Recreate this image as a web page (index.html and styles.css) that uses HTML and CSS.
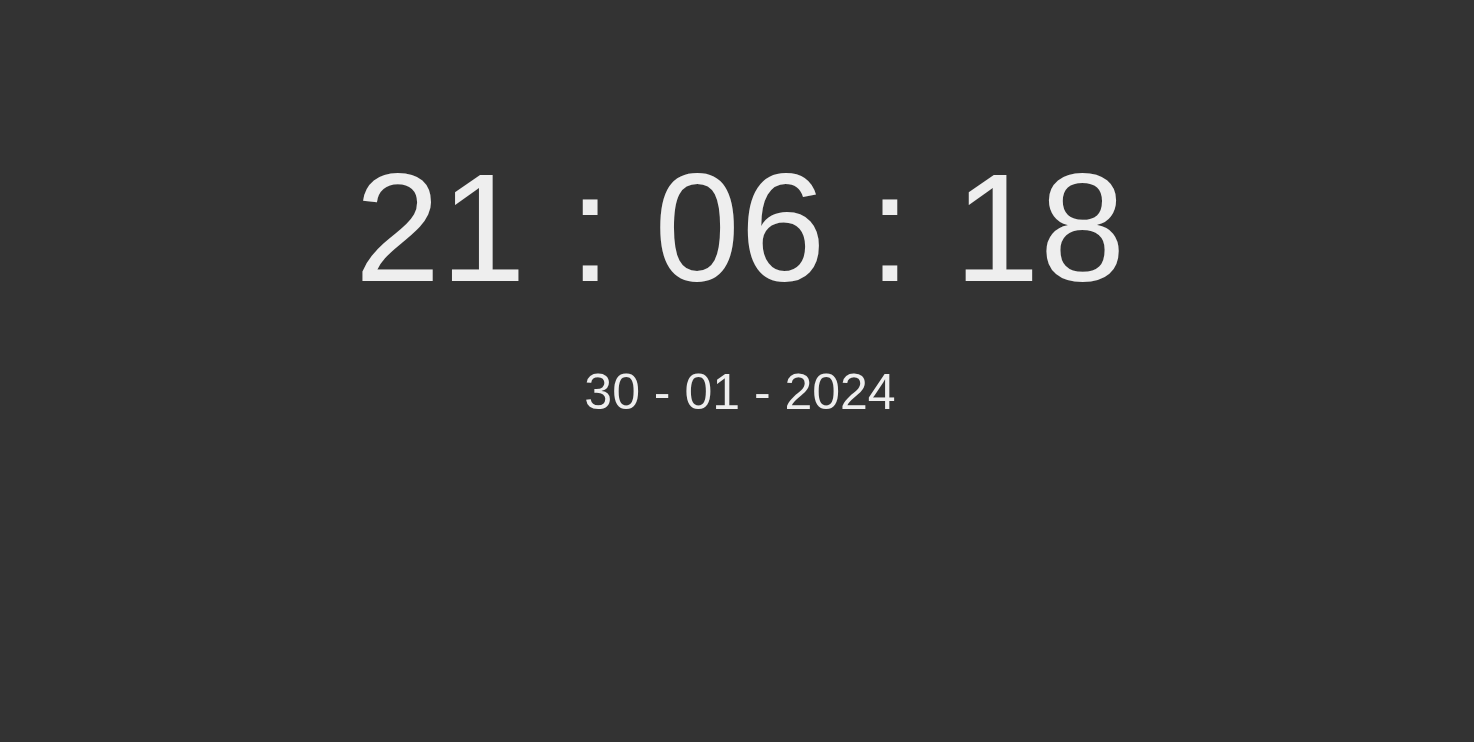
FILE: index.html
```html
<!DOCTYPE html>
<html>
<head>
<meta charset="utf-8">
<link rel="stylesheet" href="styles.css">
<title>Clock</title>
</head>
<body>
<main class="clock">
  <div class="time">21 : 06 : 18</div>
  <div class="date">30 - 01 - 2024</div>
</main>
</body>
</html>
```
FILE: styles.css
```css
html, body {
  margin: 0;
  height: 100%;
}
body {
  background: #333333;
  color: #eeeeee;
  font-family: "Liberation Sans", Arial, sans-serif;
}
.clock {
  display: flex;
  flex-direction: column;
  align-items: center;
  padding-top: 142px;
}
.time {
  font-size: 154px;
  line-height: 1.117;
  padding-left: 6px;
}
.date {
  font-size: 50px;
  line-height: 1.117;
  margin-top: 51px;
  padding-left: 6px;
}
```
